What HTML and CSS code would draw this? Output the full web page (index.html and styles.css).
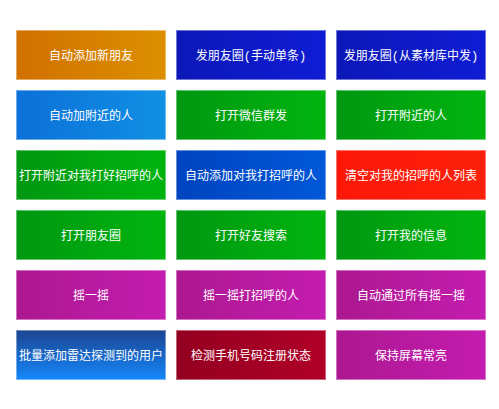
FILE: index.html
```html
<!DOCTYPE html>
<html lang="zh-CN">
<head>
<meta charset="utf-8">
<title>自动添加新朋友</title>
<link rel="stylesheet" href="styles.css">
</head>
<body>
<main class="tiles">
  <button type="button" class="tile orange">自动添加新朋友</button>
  <button type="button" class="tile navy">发朋友圈(手动单条)</button>
  <button type="button" class="tile navy">发朋友圈(从素材库中发)</button>
  <button type="button" class="tile sky">自动加附近的人</button>
  <button type="button" class="tile green">打开微信群发</button>
  <button type="button" class="tile green">打开附近的人</button>
  <button type="button" class="tile green">打开附近对我打好招呼的人</button>
  <button type="button" class="tile blue">自动添加对我打招呼的人</button>
  <button type="button" class="tile red">清空对我的招呼的人列表</button>
  <button type="button" class="tile green">打开朋友圈</button>
  <button type="button" class="tile green">打开好友搜索</button>
  <button type="button" class="tile green">打开我的信息</button>
  <button type="button" class="tile magenta">摇一摇</button>
  <button type="button" class="tile magenta">摇一摇打招呼的人</button>
  <button type="button" class="tile magenta">自动通过所有摇一摇</button>
  <button type="button" class="tile azure">批量添加雷达探测到的用户</button>
  <button type="button" class="tile crimson">检测手机号码注册状态</button>
  <button type="button" class="tile magenta">保持屏幕常亮</button>
</main>
</body>
</html>
```
FILE: styles.css
```css
body {
  margin: 0;
  background: #fff;
}

.tiles {
  display: grid;
  grid-template-columns: repeat(3, 1fr);
  grid-auto-rows: 50px;
  gap: 10px;
  padding: 30px 13px 29px 16px;
}

.tile {
  min-width: 0;
  margin: 0;
  padding: 4px 0 0;
  border: 1px solid rgba(255, 255, 255, 0.4);
  background-origin: border-box;
  color: #fff;
  font: 12px/16px "Liberation Mono", "Noto Sans CJK SC", sans-serif;
  white-space: nowrap;
  cursor: pointer;
}

.orange { background-image: linear-gradient(to right, #d07000, #dc9000); }
.navy { background-image: linear-gradient(to right, #0c18b8, #101cd4); }
.sky { background-image: linear-gradient(to right, #0c70d8, #1090e4); }
.green { background-image: linear-gradient(to right, #009810, #00b410); }
.blue { background-image: linear-gradient(to right, #0044c0, #0058d8); }
.red { background-image: linear-gradient(to right, #fc1808, #fc200c); }
.magenta { background-image: linear-gradient(to right, #ac1890, #c41cb0); }
.azure { background-image: linear-gradient(to bottom, #1c4490, #1488fc); }
.crimson { background-image: linear-gradient(to right, #940020, #b00028); }
```
